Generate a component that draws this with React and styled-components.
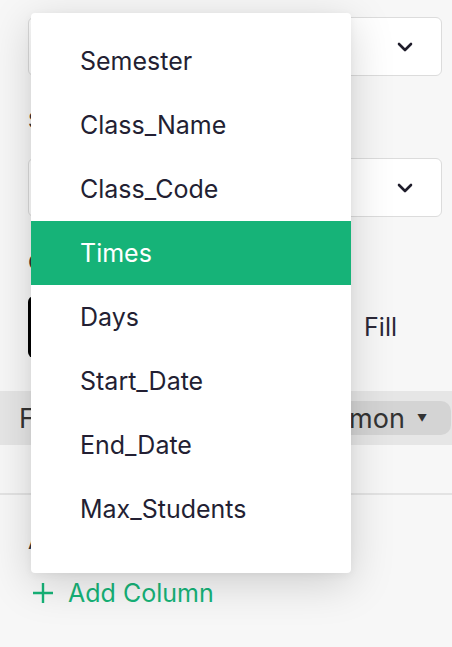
import React from "react";
import styled, { createGlobalStyle } from "styled-components";

const Global = createGlobalStyle`
  html, body { margin: 0; padding: 0; background: #f7f7f7; }
  body { font-family: Inter, "Noto Sans", sans-serif; }
  * { box-sizing: border-box; }
`;

const Page = styled.div`
  position: relative;
  width: 452px;
  height: 647px;
  overflow: hidden;
  background: #f7f7f7;
  color: #2b2838;
`;

const Section = styled.div`
  display: flex;
  flex-direction: column;
  padding: ${(p) => p.$pad || "0 10px 0 28px"};
`;

const SelectBox = styled.div`
  height: 59px;
  background: #fff;
  border: 1px solid #dcdcdc;
  border-radius: 6px;
  display: flex;
  align-items: center;
  justify-content: flex-end;
  padding-right: 28px;
  color: #222033;
`;

const Label = styled.div`
  font-size: 22px;
  line-height: 28px;
  color: #333;
  margin: ${(p) => p.$m || "0"};
`;

const ColorRow = styled.div`
  display: flex;
  align-items: center;
  justify-content: space-between;
  padding-right: 45px;
`;

const Swatch = styled.div`
  width: 62px;
  height: 62px;
  background: #000;
  border-radius: 6px;
`;

const FillText = styled.span`
  font-size: 25px;
  color: #2b2838;
`;

const Band = styled.div`
  margin-top: 33px;
  height: 54px;
  background: #e6e6e6;
  display: flex;
  align-items: center;
  justify-content: space-between;
  padding: 0 1px 0 19px;
  font-size: 27px;
  color: #333;
`;

const Chip = styled.div`
  height: 34px;
  padding: 0 24px 0 14px;
  background: #d4d4d4;
  border-radius: 10px;
  display: flex;
  align-items: center;
  gap: 12px;
  font-size: 27px;
  color: #333;
`;

const Caret = styled.span`
  font-size: 10px;
  color: #333;
`;

const Divider = styled.div`
  margin-top: 48px;
  height: 2px;
  background: #e3e3e3;
`;

const AddButton = styled.div`
  display: flex;
  align-items: center;
  gap: 14px;
  margin: 23px 0 0 4px;
  color: #16b378;
  font-size: 25px;
`;

const Menu = styled.div`
  position: absolute;
  top: 13px;
  left: 31px;
  width: 320px;
  background: #fff;
  border-radius: 4px;
  box-shadow: 0 10px 44px rgba(0, 0, 0, 0.17), 0 2px 8px rgba(0, 0, 0, 0.05);
  padding: 16px 0 32px;
  display: flex;
  flex-direction: column;
`;

const Item = styled.div`
  height: 64px;
  display: flex;
  align-items: center;
  padding-left: 49px;
  font-size: 25px;
  color: ${(p) => (p.$active ? "#fff" : "#231f33")};
  background: ${(p) => (p.$active ? "#16b378" : "transparent")};
`;

const Chevron = () => (
  <svg width="16" height="10" viewBox="0 0 16 10" fill="none">
    <path d="M2 2l6 6 6-6" stroke="#1f1d2b" strokeWidth="2.6" strokeLinecap="round" strokeLinejoin="round" />
  </svg>
);

const Plus = () => (
  <svg width="22" height="22" viewBox="0 0 22 22" fill="none">
    <path d="M11 1v20M1 11h20" stroke="#16b378" strokeWidth="2.4" />
  </svg>
);

const items = ["Semester", "Class_Name", "Class_Code", "Times", "Days", "Start_Date", "End_Date", "Max_Students"];

export default function App() {
  return (
    <Page>
      <Global />
      <Section $pad="17px 10px 0 28px">
        <SelectBox><Chevron /></SelectBox>
        <Label $m="30px 0 24px">Sort by</Label>
        <SelectBox><Chevron /></SelectBox>
        <Label $m="31px 0 20px">Color</Label>
        <ColorRow>
          <Swatch />
          <FillText>Fill</FillText>
        </ColorRow>
      </Section>
      <Band>
        <span>Font</span>
        <Chip>
          <span>Common</span>
          <Caret>▼</Caret>
        </Chip>
      </Band>
      <Divider />
      <Section>
        <Label $m="32px 0 0">Actions</Label>
        <AddButton><Plus /><span>Add Column</span></AddButton>
      </Section>
      <Menu>
        {items.map((it) => (
          <Item key={it} $active={it === "Times"}>{it}</Item>
        ))}
      </Menu>
    </Page>
  );
}
